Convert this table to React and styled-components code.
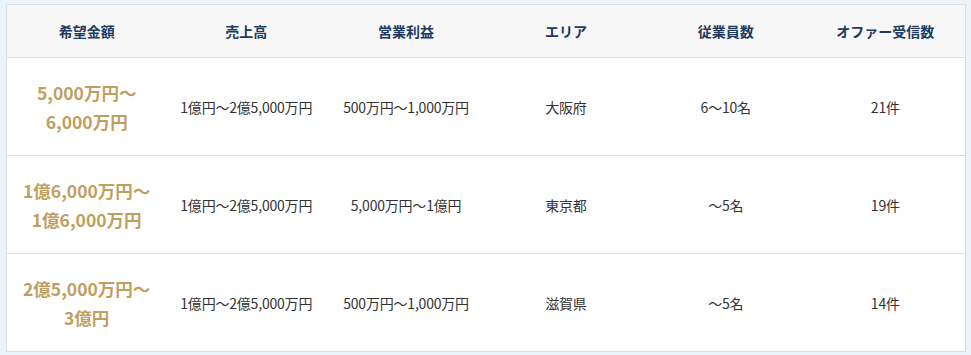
import React from 'react'
import styled, { createGlobalStyle } from 'styled-components'

const GlobalStyle = createGlobalStyle`
  html, body {
    margin: 0;
    padding: 0;
    background: #ebf4fa;
  }
  body {
    font-family: "Noto Sans CJK JP", "Noto Sans", sans-serif;
  }
`

const Page = styled.div`
  padding: 4px 5px 0 6px;
`

const Table = styled.table`
  width: 960px;
  border-collapse: collapse;
  table-layout: fixed;
  background: #fff;
  border: 1px solid #dcdfe3;
`

const HeadCell = styled.th`
  height: 52px;
  padding: 0;
  background: #f7f7f7;
  color: #1e3a5f;
  font-size: 14px;
  font-weight: 700;
  text-align: center;
  border-bottom: 1px solid #dcdfe3;
`

const Row = styled.tr`
  border-bottom: 1px solid #dcdfe3;
`

const Cell = styled.td`
  height: 97px;
  padding: 0 4px;
  text-align: center;
  vertical-align: middle;
  color: ${(p) => (p.$gold ? '#bf9f5e' : '#333')};
  font-size: ${(p) => (p.$gold ? '17.5px' : '14px')};
  font-weight: ${(p) => (p.$gold ? 700 : 400)};
  line-height: ${(p) => (p.$gold ? '29px' : '20px')};
  letter-spacing: ${(p) => (p.$gold ? '0' : '-0.2px')};
`

const headers = ['希望金額', '売上高', '営業利益', 'エリア', '従業員数', 'オファー受信数']

const rows = [
  [['5,000万円〜', '6,000万円'], '1億円〜2億5,000万円', '500万円〜1,000万円', '大阪府', '6〜10名', '21件'],
  [['1億6,000万円〜', '1億6,000万円'], '1億円〜2億5,000万円', '5,000万円〜1億円', '東京都', '〜5名', '19件'],
  [['2億5,000万円〜', '3億円'], '1億円〜2億5,000万円', '500万円〜1,000万円', '滋賀県', '〜5名', '14件'],
]

export default function App() {
  return (
    <Page>
      <GlobalStyle />
      <Table>
        <thead>
          <tr>
            {headers.map((h) => (
              <HeadCell key={h}>{h}</HeadCell>
            ))}
          </tr>
        </thead>
        <tbody>
          {rows.map((r, i) => (
            <Row key={i}>
              <Cell $gold>
                {r[0][0]}
                <br />
                {r[0][1]}
              </Cell>
              {r.slice(1).map((c, j) => (
                <Cell key={j}>{c}</Cell>
              ))}
            </Row>
          ))}
        </tbody>
      </Table>
    </Page>
  )
}
